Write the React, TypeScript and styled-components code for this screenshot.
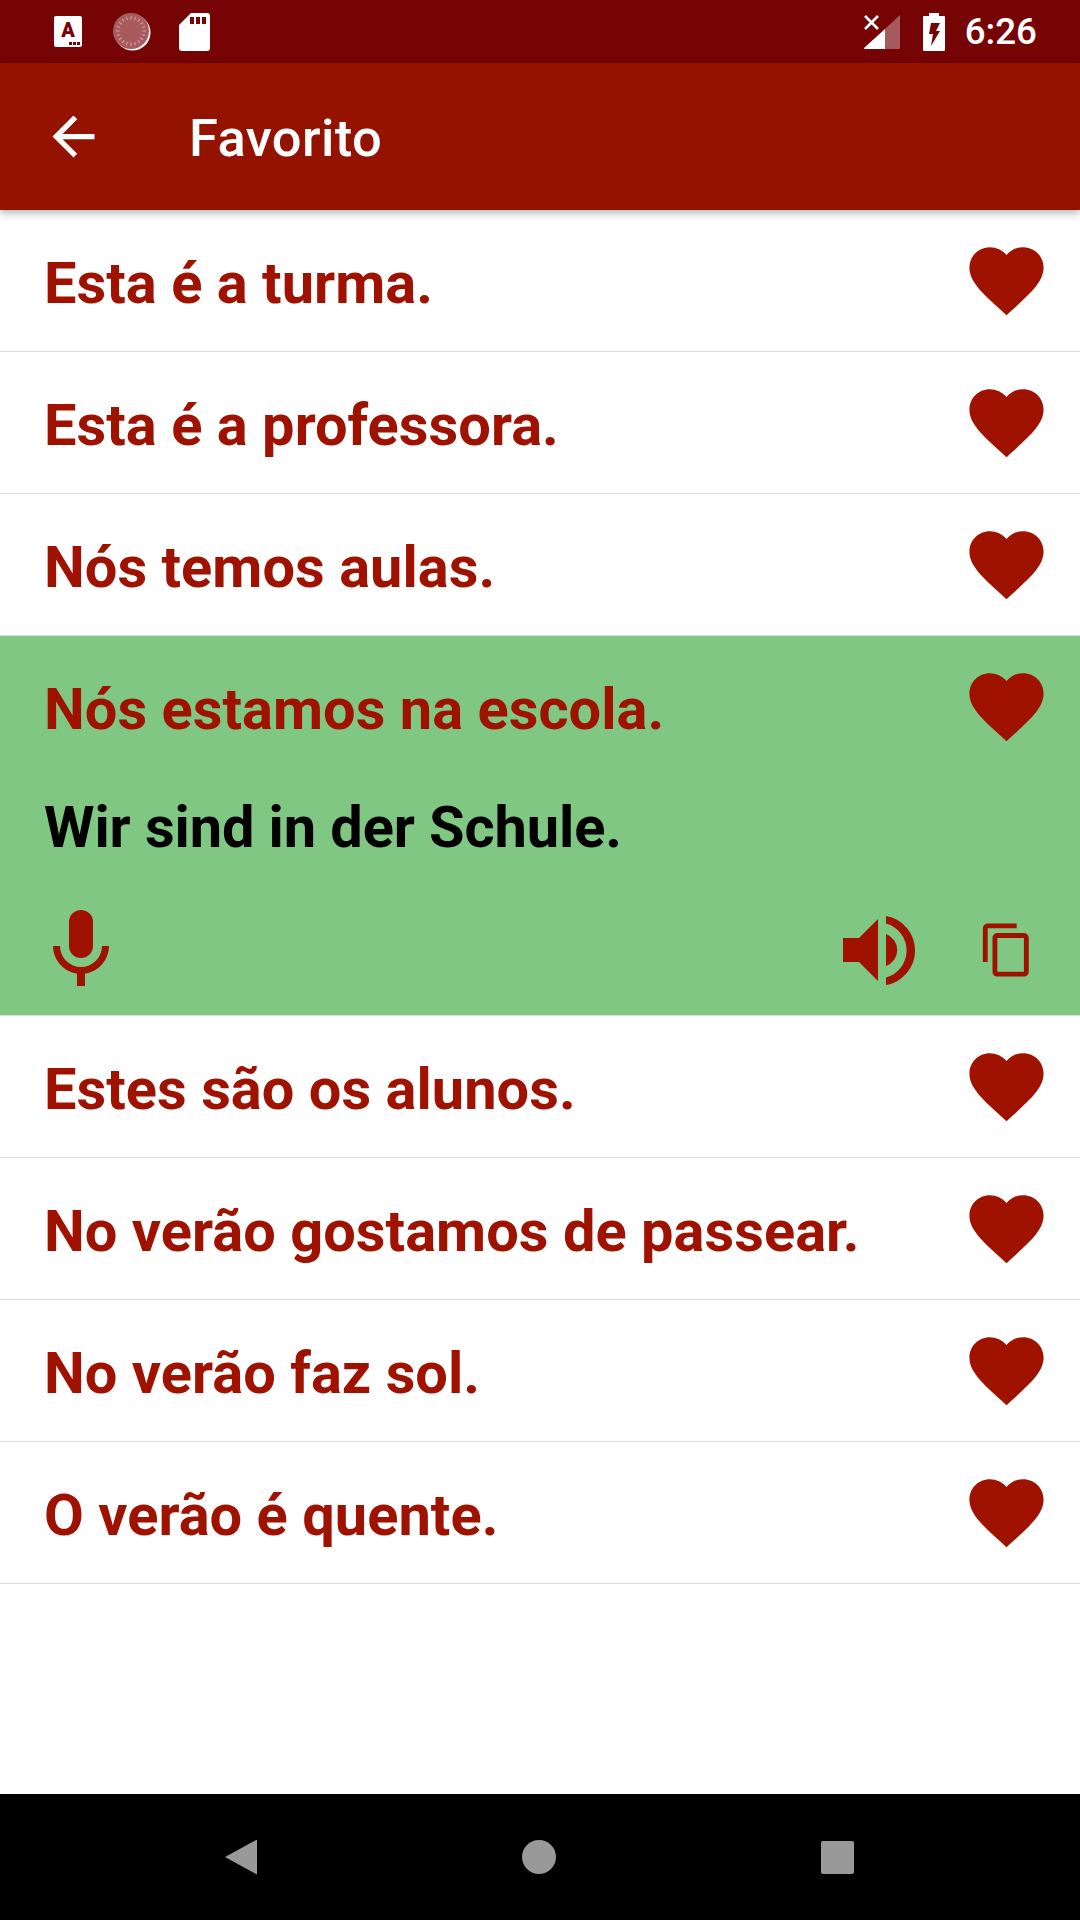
import React from 'react';
import styled, { createGlobalStyle } from 'styled-components';

const RED = '#a01200';

const phrases = [
  { text: 'Esta é a turma.' },
  { text: 'Esta é a professora.' },
  { text: 'Nós temos aulas.' },
  { text: 'Nós estamos na escola.', translation: 'Wir sind in der Schule.' },
  { text: 'Estes são os alunos.' },
  { text: 'No verão gostamos de passear.' },
  { text: 'No verão faz sol.' },
  { text: 'O verão é quente.' },
];

const LetterIcon = () => (
  <svg width="31" height="31" viewBox="0 0 31 31">
    <rect width="28" height="31" rx="2" fill="#fff" />
    <text x="14" y="21" textAnchor="middle" fontFamily="Roboto" fontWeight="900" fontSize="20" fill="#760404">
      A
    </text>
    <rect x="15" y="26" width="3" height="3" fill="#760404" />
    <rect x="19" y="26" width="3" height="3" fill="#760404" />
    <rect x="23" y="26" width="3" height="3" fill="#760404" />
  </svg>
);

const spinnerTicks = Array.from({ length: 20 }, (_, i) => i * 18);

const SpinnerIcon = () => (
  <svg width="38" height="38" viewBox="0 0 38 38">
    <circle cx="19.500" cy="19.500" r="18" fill="#fff" />
    <circle cx="18" cy="18" r="18" fill="#a85a5c" />
    {spinnerTicks.map((deg) => (
      <line
        key={deg}
        x1="18"
        y1="3"
        x2="18"
        y2="6.500"
        stroke="#c99a9a"
        strokeWidth="1.200"
        transform={`rotate(${deg} 18 18)`}
      />
    ))}
  </svg>
);

const SdCardIcon = () => (
  <svg width="31" height="38" viewBox="0 0 31 38">
    <path
      d="M12 0h16a3 3 0 0 1 3 3v32a3 3 0 0 1-3 3H3a3 3 0 0 1-3-3V12z"
      fill="#fff"
    />
    <rect x="11" y="4" width="4" height="7" fill="#760404" />
    <rect x="17" y="4" width="4" height="7" fill="#760404" />
    <rect x="23" y="4" width="4" height="7" fill="#760404" />
  </svg>
);

const SignalIcon = () => (
  <svg width="36" height="36" viewBox="0 0 36 36">
    <path d="M36 1v33a1 1 0 0 1-1 1H21V15z" fill="#fff" opacity="0.35" />
    <path d="M21 15v20H1a1 1 0 0 1-1-1z" fill="#fff" />
    <path d="M1 2l13 13M14 2L1 15" stroke="#fff" strokeWidth="2.600" fill="none" />
  </svg>
);

const BatteryIcon = () => (
  <svg width="22" height="38" viewBox="0 0 22 38">
    <path
      d="M6 0h10v3h5a1 1 0 0 1 1 1v33a1 1 0 0 1-1 1H1a1 1 0 0 1-1-1V4a1 1 0 0 1 1-1h5z"
      fill="#fff"
    />
    <path d="M8 10h9l-4 8h4l-9 15 2-12H6z" fill="#760404" />
  </svg>
);

const BackIcon = () => (
  <svg width="63" height="63" viewBox="0 0 24 24" fill="#fff">
    <path d="M20 11H7.830l5.590-5.590L12 4l-8 8 8 8 1.410-1.410L7.830 13H20v-2z" />
  </svg>
);

const HeartIcon = () => (
  <svg width="89" height="89" viewBox="0 0 24 24" fill={RED}>
    <path d="M12 21.350l-1.450-1.320C5.400 15.360 2 12.280 2 8.500 2 5.420 4.420 3 7.500 3c1.740 0 3.410.81 4.500 2.090C13.090 3.810 14.760 3 16.500 3 19.580 3 22 5.420 22 8.500c0 3.780-3.400 6.860-8.550 11.540L12 21.350z" />
  </svg>
);

const MicIcon = () => (
  <svg width="60" height="80" viewBox="0 0 60 80" fill={RED}>
    <rect x="18" y="0" width="24" height="48" rx="12" />
    <path d="M2 36h7a21 21 0 0 0 42 0h7a28 28 0 0 1-24 27.700V76h-8V63.700A28 28 0 0 1 2 36z" />
  </svg>
);

const SpeakerIcon = () => (
  <svg width="80" height="80" viewBox="0 0 80 80" fill={RED}>
    <path d="M4 28h16L39 9v62L20 52H4z" />
    <path d="M47 24a17 17 0 0 1 0 32z" />
    <path d="M47 6a35 35 0 0 1 0 69v-7.500a28 28 0 0 0 0-54z" />
  </svg>
);

const CopyIcon = () => (
  <svg width="58" height="58" viewBox="0 0 24 24" fill={RED}>
    <path d="M16 1H4c-1.100 0-2 .9-2 2v14h2V3h12V1zm3 4H8c-1.100 0-2 .9-2 2v14c0 1.100.9 2 2 2h11c1.100 0 2-.9 2-2V7c0-1.100-.9-2-2-2zm0 16H8V7h11v14z" />
  </svg>
);

const App = () => {
  return (
    <Screen>
      <GlobalStyle />
      <StatusBar>
        <StatusGroup>
          <LetterIcon />
          <SpinnerIcon />
          <SdCardIcon />
        </StatusGroup>
        <StatusRight>
          <SignalIcon />
          <BatteryIcon />
          <Clock>6:26</Clock>
        </StatusRight>
      </StatusBar>
      <Toolbar>
        <BackButton>
          <BackIcon />
        </BackButton>
        <Title>Favorito</Title>
      </Toolbar>
      <List>
        {phrases.map((phrase) => (
          <Item key={phrase.text} $open={!!phrase.translation}>
            <ItemHead>
              <Phrase>{phrase.text}</Phrase>
              <HeartIcon />
            </ItemHead>
            {phrase.translation && (
              <>
                <Translation>{phrase.translation}</Translation>
                <Actions>
                  <MicIcon />
                  <ActionsRight>
                    <SpeakerIcon />
                    <CopyIcon />
                  </ActionsRight>
                </Actions>
              </>
            )}
          </Item>
        ))}
      </List>
      <NavBar>
        <NavBack />
        <NavHome />
        <NavRecent />
      </NavBar>
    </Screen>
  );
};

const GlobalStyle = createGlobalStyle`
  html, body {
    margin: 0;
    padding: 0;
    background: #fff;
  }
`;

const Screen = styled.div`
  width: 1080px;
  height: 1920px;
  display: flex;
  flex-direction: column;
  overflow: hidden;
  font-family: Roboto, 'Liberation Sans', sans-serif;
`;

const StatusBar = styled.div`
  height: 63px;
  flex: none;
  display: flex;
  align-items: center;
  justify-content: space-between;
  padding: 0 43px 0 54px;
  background: #760404;
`;

const StatusGroup = styled.div`
  display: flex;
  align-items: center;
  gap: 28px;
`;

const StatusRight = styled.div`
  display: flex;
  align-items: center;
  gap: 20px;

  svg:first-child {
    margin-right: 3px;
  }
`;

const Clock = styled.span`
  font-size: 36.75px;
  font-weight: 500;
  color: #fff;
`;

const Toolbar = styled.header`
  height: 147px;
  flex: none;
  display: flex;
  align-items: center;
  padding-left: 42px;
  background: #941200;
  box-shadow: 0 3px 8px rgba(0, 0, 0, 0.3);
  position: relative;
  z-index: 1;
`;

const BackButton = styled.div`
  display: flex;
  width: 63px;
  height: 63px;
  margin-right: 84px;
`;

const Title = styled.h1`
  margin: 0;
  padding-top: 3px;
  font-size: 52.5px;
  font-weight: 500;
  letter-spacing: 0.4px;
  color: #fff;
`;

const List = styled.main`
  flex: 1;
`;

const Item = styled.section<{ $open: boolean }>`
  background: ${(p) => (p.$open ? '#81c784' : '#fff')};
  border-bottom: 1px solid #dcdcdc;
`;

const ItemHead = styled.div`
  height: 141px;
  display: flex;
  align-items: center;
  justify-content: space-between;
  padding: 0 29px 0 44px;
`;

const Phrase = styled.span`
  padding-top: 4px;
  font-size: 57.75px;
  font-weight: 700;
  letter-spacing: 0.04px;
  color: ${RED};
`;

const Translation = styled.div`
  height: 100px;
  display: flex;
  align-items: center;
  padding: 0 0 2px 44px;
  font-size: 57.75px;
  font-weight: 700;
  letter-spacing: -0.1px;
  color: #000;
`;

const Actions = styled.div`
  height: 131px;
  display: flex;
  align-items: center;
  justify-content: space-between;
  padding: 5px 44px 0 51px;
`;

const ActionsRight = styled.div`
  display: flex;
  align-items: center;
  gap: 59px;
`;

const NavBar = styled.nav`
  height: 126px;
  flex: none;
  display: flex;
  align-items: center;
  padding-left: 225px;
  background: #000;
`;

const NavBack = styled.div`
  width: 32px;
  height: 35px;
  background: #999;
  clip-path: polygon(100% 0, 100% 100%, 0 50%);
`;

const NavHome = styled.div`
  width: 34px;
  height: 34px;
  margin-left: 265px;
  border-radius: 50%;
  background: #999;
`;

const NavRecent = styled.div`
  width: 33px;
  height: 33px;
  margin-left: 265px;
  border-radius: 2px;
  background: #999;
`;

export default App;
